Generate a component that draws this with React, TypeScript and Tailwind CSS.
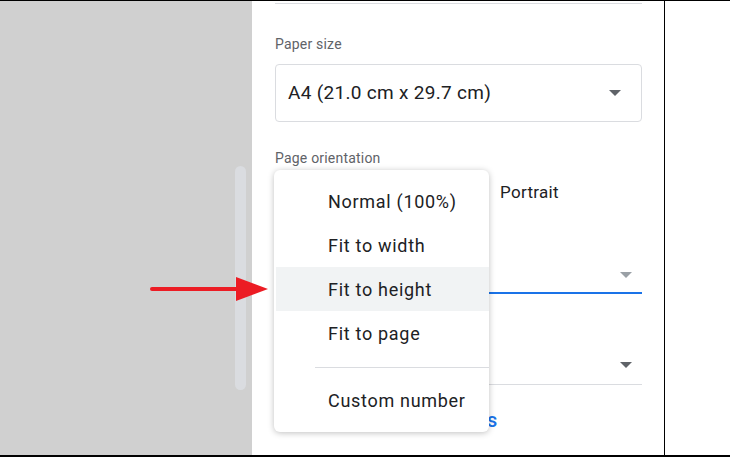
import React from "react";

const Caret = ({ c = "#5f6368" }: { c?: string }) => (
  <svg width="12" height="6" viewBox="0 0 12 6"><path d="M0 0h12L6 6z" fill={c} /></svg>
);

export default function App() {
  const items = ["Normal (100%)", "Fit to width", "Fit to height", "Fit to page"];
  return (
    <div className="relative w-[730px] h-[457px] overflow-hidden bg-white flex border-t border-b-2 border-black" style={{ fontFamily: "Roboto, 'Liberation Sans', sans-serif" }}>
      <div className="w-[252px] h-full bg-[#d0d0d0] relative">
        <div className="absolute left-[235px] top-[165px] w-[11px] h-[224px] rounded-full bg-[#dadce0]" />
      </div>
      <div className="w-[413px] h-full border-r border-black pl-[23px] pr-[22px] flex flex-col">
        <div className="mt-[2px] border-t border-[#dadce0]" />
        <div className="mt-[30px] text-[14px] text-[#5f6368] tracking-[0.2px]">Paper size</div>
        <div className="mt-[9px] h-[58px] border border-[#dadce0] rounded-[4px] flex items-center justify-between pl-[12px] pr-[20px] text-[19px] tracking-[0.3px] text-[#202124]">
          <span>A4 (21.0 cm x 29.7 cm)</span><Caret />
        </div>
        <div className="mt-[26px] text-[14px] text-[#5f6368] tracking-[0.2px]">Page orientation</div>
        <div className="mt-[11px] pl-[225px] text-[17px] tracking-[0.3px] text-[#202124]">Portrait</div>
        <div className="mt-[52px] h-[36px] border-b-2 border-[#1a73e8] flex items-center justify-end pr-[10px]"><Caret c="#9aa0a6" /></div>
        <div className="mt-[53px] h-[38px] border-b border-[#dadce0] flex items-center justify-end pr-[10px]"><Caret /></div>
        <div className="mt-[20px] pl-[212px] text-[20px] font-medium text-[#1a73e8]">s</div>
      </div>
      <div className="flex-1" />
      <div className="absolute left-[274px] top-[169px] w-[215px] h-[262px] bg-white rounded-[6px] shadow-[0_1px_6px_rgba(0,0,0,0.25)] pt-[9px] text-[18px] tracking-[0.7px] text-[#202124]">
        {items.map((t) => (
          <div key={t} className={`h-[44px] flex items-center ${t === "Fit to height" ? "bg-[#f1f3f4] ml-[2px] pl-[52px]" : "pl-[54px]"}`}>{t}</div>
        ))}
        <div className="ml-[41px] mt-[12px] border-t border-[#dadce0]" />
        <div className="h-[44px] mt-[10px] flex items-center pl-[54px]">Custom number</div>
      </div>
      <svg className="absolute left-[148px] top-[275px]" width="122" height="28" viewBox="0 0 122 28">
        <line x1="4" y1="13" x2="92" y2="13" stroke="#ec1c24" strokeWidth="4" strokeLinecap="round" />
        <path d="M88 1L120 13L88 25z" fill="#ec1c24" />
      </svg>
    </div>
  );
}
